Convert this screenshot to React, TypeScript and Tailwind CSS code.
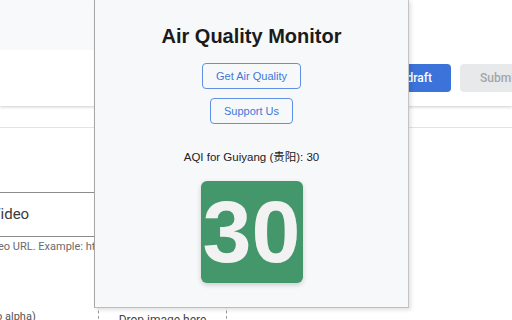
export default function App() {
  return (
    <div className="relative h-[320px] w-[512px] overflow-hidden bg-white font-['Roboto',sans-serif]">
      {/* page behind the popup */}
      <header className="h-[106px] bg-white shadow-[0_1px_3px_rgba(0,0,0,0.2)]">
        <div className="flex h-[50px]">
          <div className="w-[95px] bg-[#f8f9fa]" />
        </div>
        <div className="ml-[361px] flex w-[200px] gap-[9px] pt-[14px]">
          <button className="h-[28px] w-[90px] shrink-0 rounded-[4px] bg-[#3b73db] pr-[19px] text-right text-[12px] font-medium text-white">
            Save draft
          </button>
          <button className="h-[28px] w-[90px] shrink-0 rounded-[4px] bg-[#e8e9ea] pl-[20px] text-left text-[12px] font-medium text-[#a3a6aa]">
            Submit
          </button>
        </div>
      </header>
      <div className="mt-[21px] border-t border-[#e3e3e3]" />

      <section className="pt-[64px]">
        <div className="flex h-[45px] w-[95px] items-center overflow-hidden border-y border-[#8c8c8c]">
          <span className="ml-[-9px] whitespace-nowrap text-[15px] text-[#3a3a3a]">Video</span>
        </div>
        <div className="mt-[3px] w-[95px] overflow-hidden whitespace-nowrap text-[11px] leading-[14px] text-[#6b6b6b]">
          <span className="ml-[-2px]">eo URL. Example: https://www.youtube.com</span>
        </div>
        <div className="mt-[56px] flex">
          <div className="w-[98px] overflow-hidden whitespace-nowrap text-[11px] leading-[14px] text-[#555]">
            <span className="ml-[-4px]">o alpha)</span>
          </div>
          <div className="-mt-[10px] h-[40px] w-[129px] border border-dashed border-[#9a9a9a] pt-[11px] text-center text-[12px] leading-[16px] text-[#444]">
            Drop image here
          </div>
        </div>
      </section>

      {/* extension popup */}
      <div className="absolute left-[94px] top-0 flex h-[308px] w-[315px] flex-col items-center border-x border-b border-l-[#a6a6a6] border-r-[#c4c4c4] border-b-[#bdbdbd] bg-[#f7f8fa] shadow-[2px_2px_4px_rgba(0,0,0,0.12)]">
        <h1 className="mt-[24px] font-['Liberation_Sans',sans-serif] text-[20px] font-bold leading-[24px] text-[#1b1b1b]">
          Air Quality Monitor
        </h1>
        <button className="mt-[15px] h-[26px] rounded-[4px] border border-[#5f8fe6] px-[13px] font-['Liberation_Sans',sans-serif] text-[11px] text-[#3c78d8]">
          Get Air Quality
        </button>
        <button className="mt-[9px] h-[26px] rounded-[4px] border border-[#5f8fe6] px-[13px] font-['Liberation_Sans',sans-serif] text-[11px] text-[#3c78d8]">
          Support Us
        </button>
        <p className="mt-[25px] font-['Liberation_Sans','Noto_Sans_CJK_SC',sans-serif] text-[11.5px] leading-[16px] text-[#222]">
          AQI for Guiyang (贵阳): 30
        </p>
        <div className="mt-[16px] flex h-[102px] w-[102px] items-center justify-center rounded-[6px] bg-[#44966b] shadow-[0_2px_5px_rgba(0,0,0,0.18)]">
          <span className="font-['Liberation_Sans',sans-serif] text-[88px] font-bold leading-none text-[#f2f2f2]">30</span>
        </div>
      </div>
    </div>
  );
}
